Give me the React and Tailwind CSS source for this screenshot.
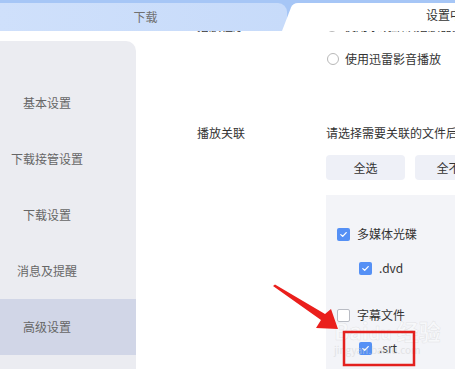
import React from "react";

function Check({ checked }) {
  return checked ? (
    <span className="flex h-[13px] w-[13px] shrink-0 items-center justify-center rounded-[2px] bg-[#5590f5]">
      <svg width="9" height="9" viewBox="0 0 9 9" fill="none">
        <path d="M1.8 4.6 L3.7 6.4 L7.2 2.6" stroke="white" strokeWidth="1.3" strokeLinecap="round" strokeLinejoin="round" />
      </svg>
    </span>
  ) : (
    <span className="h-[13px] w-[13px] shrink-0 rounded-[2px] border border-[#b9bcc4] bg-white" />
  );
}

function Radio() {
  return <span className="h-[12px] w-[12px] shrink-0 rounded-full border border-[#b8b8b8] bg-white" />;
}

const navItems = ["基本设置", "下载接管设置", "下载设置", "消息及提醒", "高级设置"];

export default function App() {
  return (
    <div
      className="relative flex h-[369px] w-[455px] flex-col overflow-hidden bg-white text-[12px] leading-[20px] text-[#333]"
      style={{ fontFamily: '"Noto Sans CJK SC", "Noto Sans", sans-serif' }}
    >
      {/* tab bar */}
      <div className="relative z-10 flex h-[31px] shrink-0 bg-[#a6c6f6]">
        <div className="mt-[3px] flex w-[287px] shrink-0 items-center justify-center rounded-tr-[9px] bg-gradient-to-r from-[#cfe0fb] to-[#c7dbfa] pb-[1px] pl-[4px] text-[#707070]">
          下载
        </div>
        <div className="relative -ml-[6px] flex flex-1 items-center pb-[1px]">
          <svg className="absolute inset-0" width="180" height="31" viewBox="0 0 180 31">
            <path d="M1 31 L10 7.5 Q11.8 3 17 3 H180 V31 Z" fill="white" />
          </svg>
          <span className="relative pl-[145px] whitespace-nowrap text-[#333]">设置中心</span>
        </div>
      </div>

      {/* body */}
      <div className="flex min-h-0 flex-1 overflow-hidden">
        {/* sidebar */}
        <div className="mt-[10px] flex w-[136px] shrink-0 flex-col rounded-tr-[10px] bg-[#ebecf1] pt-[34px] text-[#666]">
          {navItems.map((t, i) => (
            <div
              key={t}
              className={`flex h-[56px] items-center justify-center pr-[42px] whitespace-nowrap ${
                i === 4 ? "bg-[#d1d6e7]" : ""
              }`}
            >
              {t}
            </div>
          ))}
          <div className="flex-1" />
        </div>

        {/* content */}
        <div className="flex min-w-0 flex-1 flex-col">
          <div className="mt-[-15px] flex h-[20px] items-center">
            <div className="w-[190px] shrink-0 pl-[61px]">播放程序</div>
            <div className="flex items-center gap-[6px] whitespace-nowrap">
              <Radio />
              <span>使用系统默认播放器播放</span>
            </div>
          </div>
          <div className="mt-[13px] flex h-[20px] items-center">
            <div className="w-[190px] shrink-0" />
            <div className="ml-[1px] flex items-center gap-[6px] whitespace-nowrap">
              <Radio />
              <span>使用迅雷影音播放</span>
            </div>
          </div>
          <div className="mt-[54px] flex h-[20px] items-center">
            <div className="w-[190px] shrink-0 pl-[61px]">播放关联</div>
            <div className="whitespace-nowrap">请选择需要关联的文件后缀</div>
          </div>
          <div className="mt-[12px] flex h-[25px] gap-[10px] pl-[190px]">
            <div className="flex w-[79px] shrink-0 items-center justify-center rounded-[4px] bg-[#eef0f7]">全选</div>
            <div className="flex w-[79px] shrink-0 items-center justify-center rounded-[4px] bg-[#eef0f7]">全不选</div>
          </div>
          <div className="ml-[190px] mt-[15px] flex flex-1 flex-col bg-[#f3f4f8] pt-[29px]">
            <div className="flex h-[20px] items-center gap-[7px] pl-[11px] whitespace-nowrap">
              <Check checked />
              <span>多媒体光碟</span>
            </div>
            <div className="mt-[14px] flex h-[20px] items-center gap-[7px] pl-[33px] whitespace-nowrap">
              <Check checked />
              <span>.dvd</span>
            </div>
            <div className="mt-[27px] flex h-[20px] items-center gap-[7px] pl-[11px] whitespace-nowrap">
              <Check />
              <span>字幕文件</span>
            </div>
            <div className="mt-[13px] flex h-[20px] items-center gap-[7px] pl-[33px] whitespace-nowrap">
              <Check checked />
              <span>.srt</span>
            </div>
          </div>
        </div>
      </div>

      {/* watermark */}
      <div className="pointer-events-none absolute left-[334px] top-[318px] whitespace-nowrap text-[22px] font-bold leading-[24px] text-white/40 [-webkit-text-stroke:0.5px_rgba(190,190,190,0.35)]">
        Bai<span className="text-[18px]">du</span> 经验
      </div>
      <div className="pointer-events-none absolute left-[334px] top-[344px] whitespace-nowrap text-[10px] leading-[12px] text-[#d0d0d0]/50">
        jingyan.baidu.com
      </div>

      {/* red annotation */}
      <svg className="pointer-events-none absolute left-0 top-0" width="455" height="369" viewBox="0 0 455 369">
        <path d="M273 286 L275 284.5 L325 314 L331 309 L338 329 L316 328 L321 320 Z" fill="#ea1f1c" />
        <rect x="344" y="332" width="70" height="33" fill="none" stroke="#e3201e" strokeWidth="2.5" />
      </svg>
    </div>
  );
}
